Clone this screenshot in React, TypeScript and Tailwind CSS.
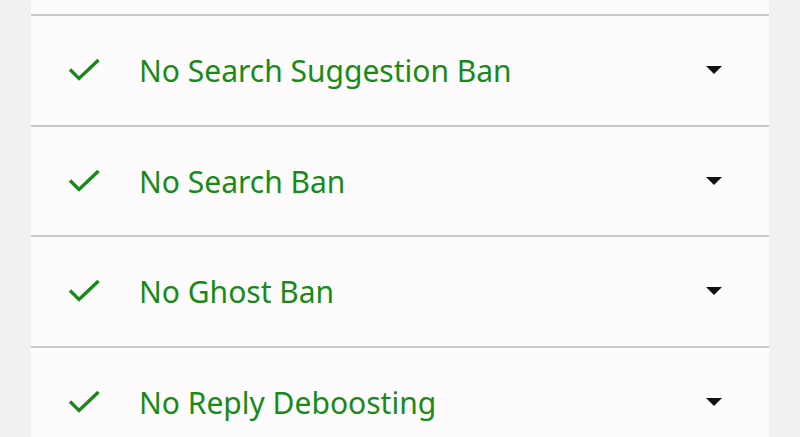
const items = [
  "No Search Suggestion Ban",
  "No Search Ban",
  "No Ghost Ban",
  "No Reply Deboosting",
];

function CheckIcon() {
  return (
    <svg width="34" height="26" viewBox="0 0 34 26" className="mt-[2px] shrink-0">
      <path
        d="M2 11.5 L11 20.5 L30.5 2"
        fill="none"
        stroke="#178a17"
        strokeWidth="3.4"
      />
    </svg>
  );
}

function Caret() {
  return (
    <svg width="18" height="10" viewBox="0 0 18 10">
      <path d="M1 1 L17 1 L9 9 Z" fill="#111" />
    </svg>
  );
}

export default function App() {
  return (
    <div className="flex h-[437px] w-[800px] overflow-hidden bg-[#f0f1f3] px-[31px] font-['Noto_Sans',sans-serif]">
      <div className="flex w-full flex-col bg-[#fdfbfc]">
        <div className="h-[14px] shrink-0" />
        {items.map((label) => (
          <div
            key={label}
            className="flex h-[110.5px] shrink-0 items-center border-t-2 border-[#cacaca] pl-[37px] pr-[46px]"
          >
            <CheckIcon />
            <span className="ml-[37px] flex-1 pt-[2px] text-[30px] leading-none text-[#178a17]">
              {label}
            </span>
            <Caret />
          </div>
        ))}
      </div>
    </div>
  );
}
